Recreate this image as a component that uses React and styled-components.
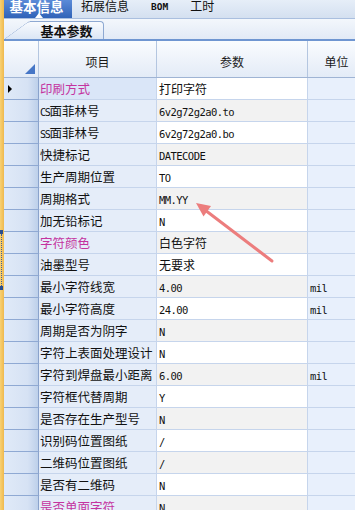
import React from "react";
import styled, { createGlobalStyle } from "styled-components";

const CJK = `"Noto Sans CJK SC", "Noto Sans", sans-serif`;
const MONO = `"DejaVu Sans Mono", "Liberation Mono", monospace`;

const Global = createGlobalStyle`
  html, body { margin: 0; padding: 0; background: #fff; overflow: hidden; }
  #root { width: 355px; height: 510px; }
`;

const Frame = styled.div`
  position: relative;
  width: 355px;
  height: 510px;
  overflow: hidden;
  display: flex;
  font-family: ${CJK};
  color: #111;
`;

const Strip = styled.div`
  width: 4px;
  flex: none;
  box-sizing: border-box;
  padding-top: 230px;
  background: linear-gradient(to right, #f8d173, #efb94e);
  display: flex;
  flex-direction: column;
`;

const GripMark = styled.div`
  width: 3px;
  height: 4px;
  background: #2b4f8e;
`;

const GripDots = styled.div`
  height: 52px;
  margin-left: 1px;
  border-left: 1px dotted #3a5f9c;
`;

const Main = styled.div`
  flex: 1;
  min-width: 0;
  display: flex;
  flex-direction: column;
  overflow: hidden;
`;

const TopTabs = styled.div`
  height: 18px;
  flex: none;
  display: flex;
  border-bottom: 1px solid #aabfdf;
  background: linear-gradient(#e6eef8, #d4e0f0);
`;

const ActiveTab = styled.div`
  position: relative;
  width: 68px;
  display: flex;
  justify-content: center;
  padding-right: 3px;
  box-sizing: border-box;
  background: linear-gradient(#5b8bd8, #3063b8);
  color: #fff;
  font-weight: 700;
  font-size: 13.5px;
  line-height: 12px;
  overflow: hidden;
  &::after {
    content: "";
    position: absolute;
    bottom: 0;
    left: 31px;
    border-left: 4px solid transparent;
    border-right: 4px solid transparent;
    border-bottom: 5px solid #fff;
  }
`;

const Tab = styled.div`
  padding: 0 11px 0 ${(p) => p.$lead || 11}px;
  font-size: ${(p) => (p.$latin ? "9.5px" : "12px")};
  font-family: ${(p) => (p.$latin ? MONO : CJK)};
  font-weight: ${(p) => (p.$latin ? 700 : 400)};
  line-height: ${(p) => (p.$latin ? "13px" : "12px")};
  color: #111;
  white-space: nowrap;
`;

const SubStrip = styled.div`
  height: 22px;
  flex: none;
  box-sizing: border-box;
  display: flex;
  align-items: flex-end;
  padding-left: 26px;
  background: linear-gradient(#f3f7fc, #e2eaf6);
  border-bottom: 2px solid #6f96d1;
`;

const SubTab = styled.div`
  position: relative;
  z-index: 0;
  width: 74px;
  height: 18px;
  box-sizing: border-box;
  border-top: 1px solid #8ea9d2;
  border-right: 1px solid #8ea9d2;
  border-top-right-radius: 4px;
  background: linear-gradient(#f9fbfe, #dbe6f5);
  font-weight: 700;
  font-size: 13px;
  line-height: 17px;
  text-align: center;
  color: #111;
  &::before {
    content: "";
    position: absolute;
    z-index: -1;
    top: -1px;
    bottom: 0;
    left: -26px;
    width: 32px;
    border-left: 1px solid #8ea9d2;
    border-top: 1px solid #8ea9d2;
    border-top-left-radius: 3px;
    background: linear-gradient(#f9fbfe, #dbe6f5);
    transform-origin: bottom left;
    transform: skewX(-54deg);
  }
`;

const COLS = "35px 118px 151px 58px";

const Header = styled.div`
  display: grid;
  grid-template-columns: ${COLS};
  height: 36px;
  flex: none;
  border-bottom: 1px solid #9fb4d4;
  background: linear-gradient(#fafcfe, #e3ebf7);
`;

const HeadCell = styled.div`
  display: flex;
  align-items: center;
  justify-content: center;
  padding-top: 4px;
  border-right: 1px solid #b4c6e0;
  font-size: 12px;
  color: #1a1a1a;
  white-space: nowrap;
`;

const Corner = styled.div`
  display: flex;
  align-items: flex-end;
  justify-content: flex-end;
  padding: 0 3px 3px 0;
  border-right: 1px solid #b4c6e0;
`;

const CornerMark = styled.div`
  width: 0;
  height: 0;
  border-left: 10px solid transparent;
  border-bottom: 10px solid #4676c6;
`;

const Body = styled.div`
  flex: 1;
  overflow: hidden;
`;

const Row = styled.div`
  display: grid;
  grid-template-columns: ${COLS};
  height: 22px;
`;

const Indicator = styled.div`
  display: flex;
  align-items: center;
  padding-left: 4px;
  border-bottom: 1px solid #8fa9d3;
  border-right: 1px solid #8aa3cc;
  background: linear-gradient(to right, #e0eaf8, #d6e2f4 70%, #bdd0ea);
`;

const Pointer = styled.div`
  width: 0;
  height: 0;
  border-top: 4px solid transparent;
  border-bottom: 4px solid transparent;
  border-left: 4px solid #000;
`;

const Cell = styled.div`
  box-sizing: border-box;
  padding-left: ${(p) => p.$pad}px;
  padding-top: 1px;
  border-bottom: 1px solid #c6d5ec;
  border-right: 1px solid #c6d5ec;
  background: ${(p) => p.$bg};
  color: ${(p) => (p.$accent ? "#c4339f" : "#111")};
  font-size: ${(p) => p.$size}px;
  line-height: 20px;
  white-space: nowrap;
  overflow: hidden;
`;

const Latin = styled.span`
  font-family: ${MONO};
  font-size: ${(p) => (p.$narrow ? "10px" : "10.5px")};
  letter-spacing: ${(p) => (p.$narrow ? "-1.3px" : "-0.55px")};
  color: inherit;
`;

const Overlay = styled.svg`
  position: absolute;
  left: 0;
  top: 0;
  pointer-events: none;
`;

const rows = [
  { label: "印刷方式", value: "打印字符", accent: true, first: true },
  { label: "CS面菲林号", value: "6v2g72g2a0.to" },
  { label: "SS面菲林号", value: "6v2g72g2a0.bo" },
  { label: "快捷标记", value: "DATECODE" },
  { label: "生产周期位置", value: "TO" },
  { label: "周期格式", value: "MM.YY" },
  { label: "加无铅标记", value: "N" },
  { label: "字符颜色", value: "白色字符", accent: true },
  { label: "油墨型号", value: "无要求" },
  { label: "最小字符线宽", value: "4.00", unit: "mil" },
  { label: "最小字符高度", value: "24.00", unit: "mil" },
  { label: "周期是否为阴字", value: "N" },
  { label: "字符上表面处理设计", value: "N" },
  { label: "字符到焊盘最小距离", value: "6.00", unit: "mil" },
  { label: "字符框代替周期", value: "Y" },
  { label: "是否存在生产型号", value: "N" },
  { label: "识别码位置图纸", value: "/" },
  { label: "二维码位置图纸", value: "/" },
  { label: "是否有二维码", value: "N" },
  { label: "是否单面字符", value: "N", accent: true },
];

const ASCII = /^[\x20-\x7e]+$/;

function Mixed({ text, narrow }) {
  return text
    .split(/([\x20-\x7e]+)/)
    .filter(Boolean)
    .map((part, i) =>
      ASCII.test(part) ? (
        <Latin key={i} $narrow={narrow}>
          {part}
        </Latin>
      ) : (
        <span key={i}>{part}</span>
      )
    );
}

export default function App() {
  return (
    <>
      <Global />
      <Frame>
        <Strip>
          <GripMark />
          <GripDots />
          <GripMark />
        </Strip>
        <Main>
          <TopTabs>
            <ActiveTab>基本信息</ActiveTab>
            <Tab $lead={9}>拓展信息</Tab>
            <Tab $latin>BOM</Tab>
            <Tab>工时</Tab>
          </TopTabs>
          <SubStrip>
            <SubTab>基本参数</SubTab>
          </SubStrip>
          <Header>
            <Corner>
              <CornerMark />
            </Corner>
            <HeadCell>项目</HeadCell>
            <HeadCell>参数</HeadCell>
            <HeadCell>单位</HeadCell>
          </Header>
          <Body>
            {rows.map((r, i) => (
              <Row key={i}>
                <Indicator>{r.first && <Pointer />}</Indicator>
                <Cell
                  $pad={1}
                  $size={12.5}
                  $accent={r.accent}
                  $bg={r.first ? "#dae6f8" : "#e5edf9"}
                >
                  <Mixed text={r.label} narrow />
                </Cell>
                <Cell $pad={2} $size={12} $bg={i % 2 === 0 ? "#ffffff" : "#f2f2f2"}>
                  <Mixed text={r.value} />
                </Cell>
                <Cell $pad={2} $size={12} $bg="#e8f0fc">
                  {r.unit && <Latin>{r.unit}</Latin>}
                </Cell>
              </Row>
            ))}
          </Body>
        </Main>
        <Overlay width="355" height="510" viewBox="0 0 355 510">
          <line
            x1="272"
            y1="261"
            x2="205"
            y2="210"
            stroke="#ec7d7d"
            strokeWidth="3"
            strokeLinecap="round"
          />
          <polygon points="196,203 211,206 203.5,216.5" fill="#ec7d7d" />
        </Overlay>
      </Frame>
    </>
  );
}
